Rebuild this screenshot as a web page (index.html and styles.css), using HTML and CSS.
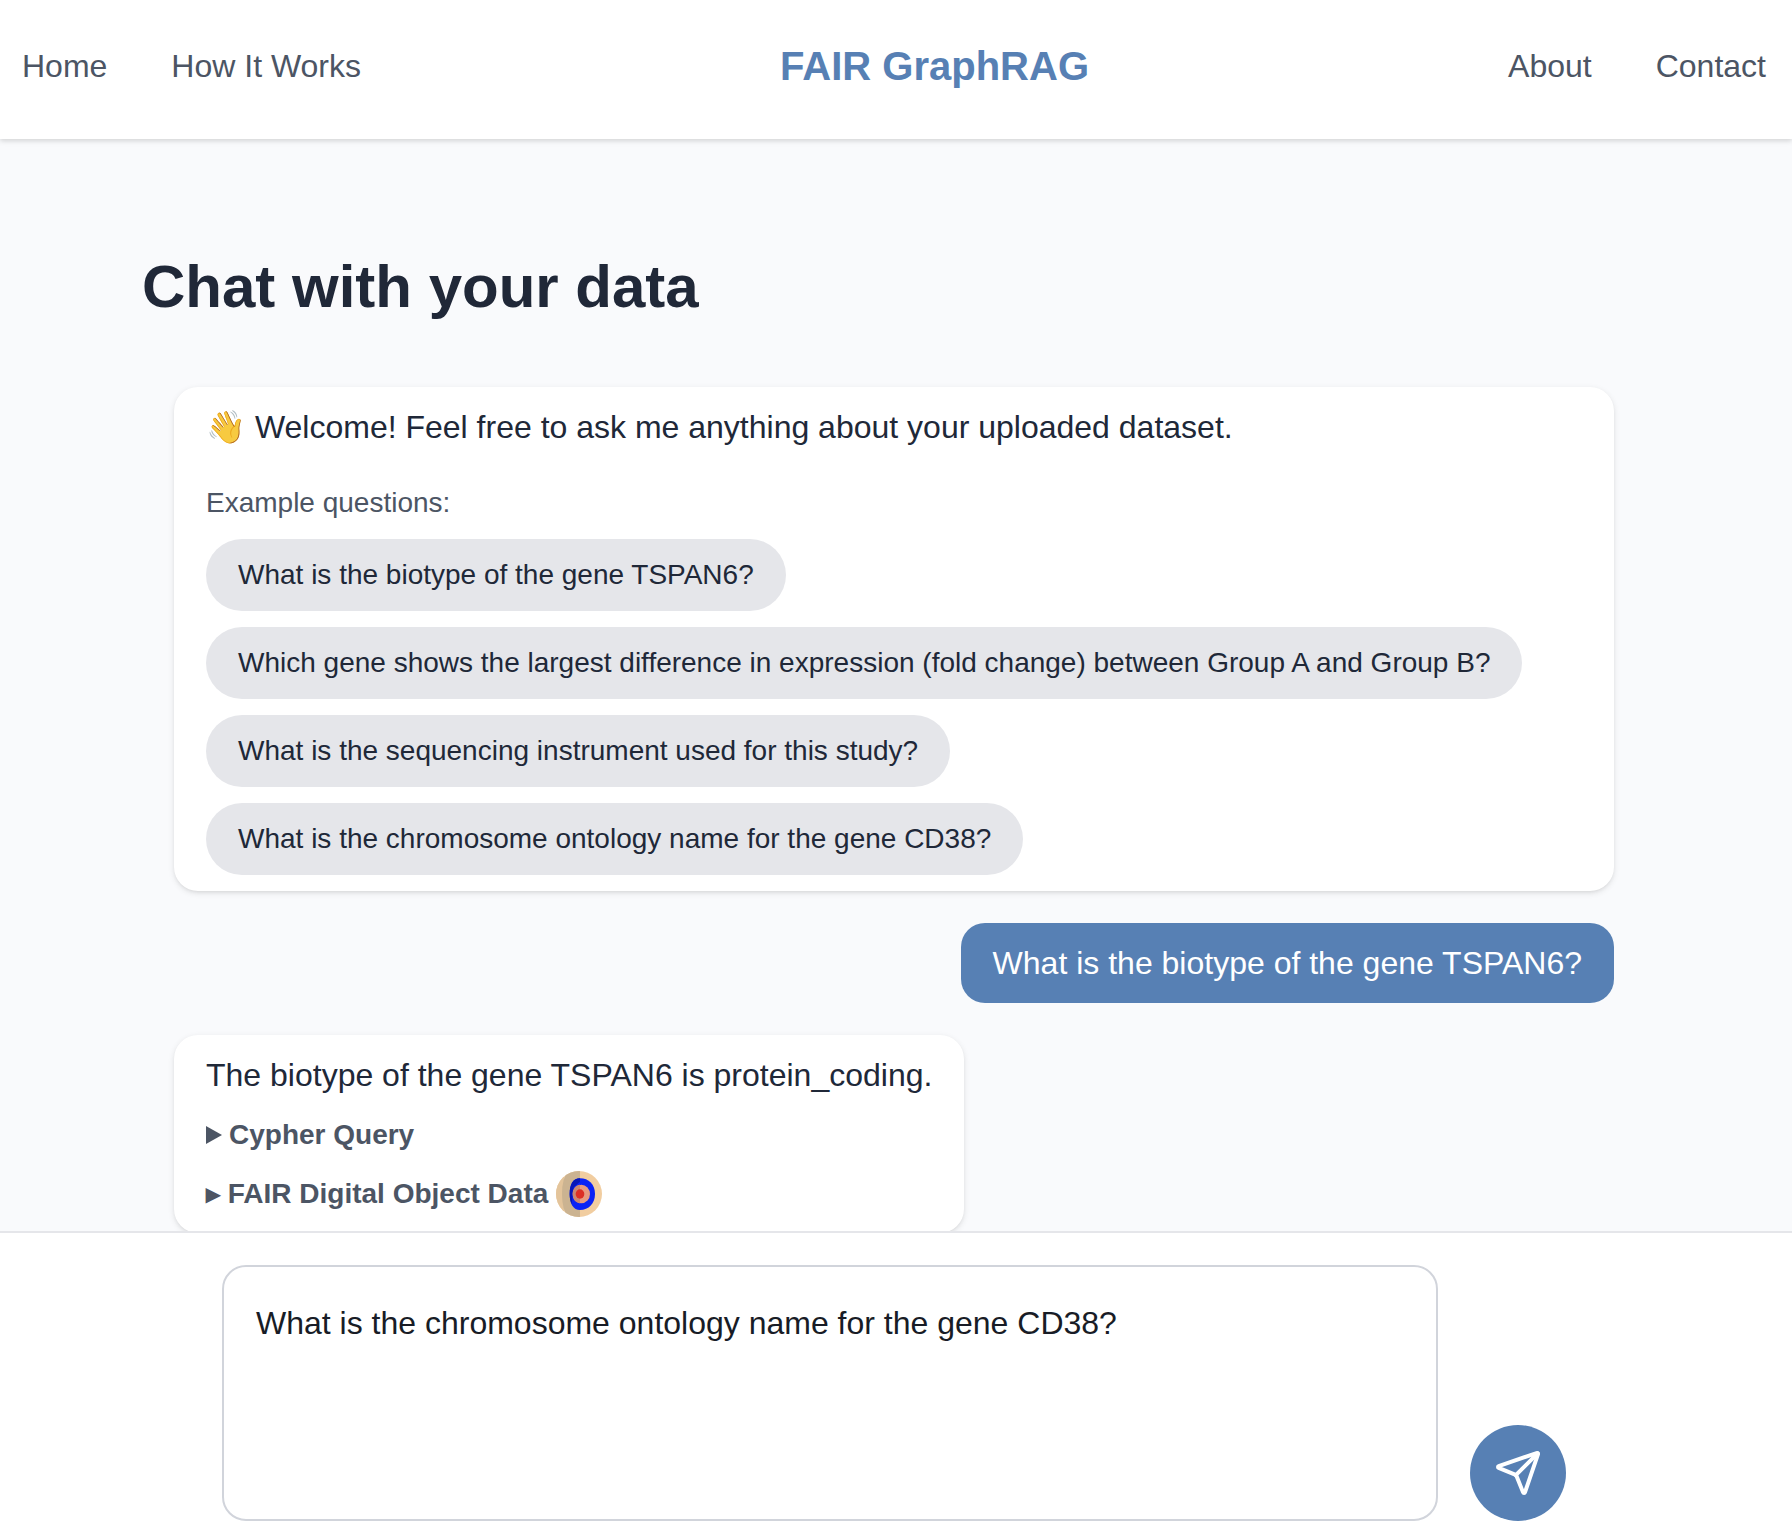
FILE: index.html
```html
<!DOCTYPE html>
<html lang="en">
<head>
<meta charset="utf-8">
<meta name="viewport" content="width=device-width, initial-scale=1">
<title>FAIR GraphRAG</title>
<link rel="stylesheet" href="styles.css">
</head>
<body>
<header class="site-header">
  <nav class="nav" aria-label="Main">
    <a href="#home">Home</a>
    <a href="#how">How It Works</a>
  </nav>
  <a class="brand" href="#home">FAIR GraphRAG</a>
  <nav class="nav" aria-label="More">
    <a href="#about">About</a>
    <a href="#contact">Contact</a>
  </nav>
</header>

<main class="chat">
  <div class="chat-inner">
    <h1>Chat with your data</h1>
    <div class="messages">
      <section class="message bot wide">
        <p><span class="emoji">👋</span> Welcome! Feel free to ask me anything about your uploaded dataset.</p>
        <p class="hint">Example questions:</p>
        <div class="examples">
          <button type="button" class="pill">What is the biotype of the gene TSPAN6?</button>
          <button type="button" class="pill">Which gene shows the largest difference in expression (fold change) between Group A and Group B?</button>
          <button type="button" class="pill">What is the sequencing instrument used for this study?</button>
          <button type="button" class="pill">What is the chromosome ontology name for the gene CD38?</button>
        </div>
      </section>
      <p class="message user">What is the biotype of the gene TSPAN6?</p>
      <section class="message bot">
        <p>The biotype of the gene TSPAN6 is protein_coding.</p>
        <details class="source">
          <summary>Cypher Query</summary>
        </details>
        <button type="button" class="fdo">
          <span>▸ FAIR Digital Object Data</span>
          <svg class="fdo-logo" viewBox="0 0 138 138" aria-hidden="true">
            <defs><clipPath id="disc"><circle cx="69" cy="69" r="69"/></clipPath></defs>
            <g clip-path="url(#disc)">
              <path fill="#f1cda0" d="M0 0h138v138H0z"/>
              <path fill="#e3c49b" d="M0 0h24v138H0z"/>
              <path fill="#cbb391" d="M72 0H36Q18 22 18 69t18 69h36z"/>
              <path fill="#0a22f5" d="M72 22c26 0 45 18 45 47s-19 48-45 48c-20 0-31-18-31-48s11-47 31-47z"/>
              <path fill="#0616b8" d="M72 22c-20 0-31 17-31 47 0 12 2 22 6 30l6-50 19-17z"/>
              <ellipse fill="#e89a80" cx="76" cy="69" rx="26" ry="28"/>
              <path fill="#c98672" d="M72 41c-14 2-22 12-22 28s8 26 22 28z"/>
              <ellipse fill="#dc2f25" cx="72" cy="69" rx="13" ry="14"/>
            </g>
          </svg>
        </button>
      </section>
    </div>
  </div>
</main>

<footer class="composer">
  <form class="composer-form">
    <textarea class="composer-input" aria-label="Your question">What is the chromosome ontology name for the gene CD38?</textarea>
    <button type="button" class="send" aria-label="Send">
      <svg viewBox="0 0 24 24" aria-hidden="true">
        <path d="M14.536 21.686a.5.5 0 0 0 .937-.024l6.5-19a.496.496 0 0 0-.635-.635l-19 6.5a.5.5 0 0 0-.024.937l7.93 3.18a2 2 0 0 1 1.112 1.11z"/>
        <path d="m21.854 2.147-10.94 10.939"/>
      </svg>
    </button>
  </form>
</footer>
</body>
</html>
```
FILE: styles.css
```css
* {
  box-sizing: border-box;
  margin: 0;
}

:root {
  --blue: #5780b4;
  --ink: #202838;
  --muted: #4c5564;
  --shadow: 0 2px 6px rgba(0, 0, 0, .1), 0 2px 4px -2px rgba(0, 0, 0, .1);
}

body {
  display: flex;
  flex-direction: column;
  height: 100vh;
  background: #f9fafc;
  color: var(--ink);
  font: 32px/48px "Liberation Sans", Arial, sans-serif;
}

button {
  border: 0;
  color: inherit;
  font: inherit;
  text-align: left;
  cursor: pointer;
}

.site-header {
  display: flex;
  justify-content: space-between;
  align-items: center;
  padding: 38px 26px 45px 22px;
  background: #fff;
  box-shadow: 0 2px 6px rgba(0, 0, 0, .1), 0 2px 4px rgba(0, 0, 0, .06);
  z-index: 1;
}

.nav {
  display: flex;
  gap: 64px;
}

.nav a {
  color: var(--muted);
  text-decoration: none;
}

.brand {
  color: var(--blue);
  font-size: 40px;
  font-weight: 700;
  line-height: 56px;
  text-decoration: none;
}

.chat {
  flex: 1;
  min-height: 0;
  overflow: hidden;
  padding: 112px 4px 0 0;
}

.chat-inner {
  max-width: 1504px;
  margin: 0 auto;
}

h1 {
  font-size: 60px;
  line-height: 72px;
}

.messages {
  display: flex;
  flex-direction: column;
  align-items: flex-start;
  gap: 32px;
  padding: 64px 32px;
}

.message {
  padding: 16px 32px;
  border-radius: 24px;
}

.bot {
  background: #fff;
  box-shadow: var(--shadow);
}

.wide {
  width: 100%;
}

.user {
  align-self: flex-end;
  background: var(--blue);
  color: #fff;
}

.emoji {
  filter: saturate(.85);
}

.hint {
  margin: 32px 0 16px;
  color: var(--muted);
  font-size: 28px;
  line-height: 40px;
}

.examples {
  display: flex;
  flex-direction: column;
  align-items: flex-start;
  gap: 16px;
}

.pill {
  padding: 16px 32px;
  border-radius: 36px;
  background: #e5e6ea;
  font-size: 28px;
  line-height: 40px;
}

.source,
.fdo {
  margin-top: 16px;
  color: var(--muted);
  font-size: 28px;
  font-weight: 700;
  line-height: 40px;
}

.source summary {
  display: flex;
  align-items: center;
  gap: 7px;
  list-style: none;
  cursor: pointer;
}

.source summary::before {
  content: "";
  width: 16px;
  height: 18px;
  background: currentColor;
  clip-path: polygon(0 0, 100% 50%, 0 100%);
}

.fdo {
  display: flex;
  align-items: center;
  gap: 8px;
  padding: 0;
  background: none;
}

.fdo-logo {
  width: 46px;
  height: 46px;
}

.composer {
  padding: 32px 4px 10px 0;
  border-top: 2px solid #e5e6ea;
  background: #fff;
}

.composer-form {
  display: flex;
  align-items: flex-end;
  gap: 32px;
  max-width: 1344px;
  margin: 0 auto;
}

.composer-input {
  flex: 1;
  height: 256px;
  padding: 32px;
  border: 2px solid #d1d4db;
  border-radius: 24px;
  background: #fff;
  color: #181c26;
  font: inherit;
  resize: none;
}

.send {
  display: grid;
  place-items: center;
  width: 96px;
  height: 96px;
  padding: 0;
  border-radius: 50%;
  background: var(--blue);
}

.send svg {
  width: 48px;
  height: 48px;
  fill: none;
  stroke: #fff;
  stroke-width: 2;
  stroke-linecap: round;
  stroke-linejoin: round;
}
```
